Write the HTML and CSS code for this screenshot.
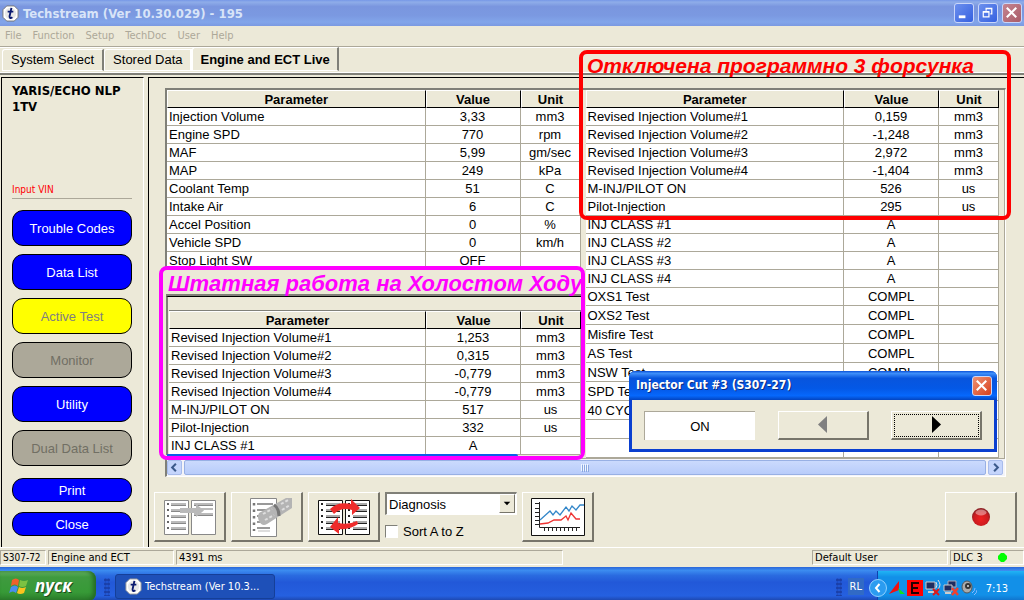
FILE: index.html
```html
<!DOCTYPE html>
<html lang="en">
<head>
<meta charset="utf-8">
<title>Techstream (Ver 10.30.029) - 195</title>
<link rel="stylesheet" href="styles.css">
</head>
<body>
<header class="titlebar">
  <svg class="logo" viewBox="0 0 18 18" aria-hidden="true"><path d="M5 1h8l4 4v8l-4 4H5l-4-4V5z" fill="#fff" stroke="#777"/><circle cx="9" cy="9" r="6" fill="#e8e8e8"/><path d="M10 3L8 12q0 3 3 1M6 7h6" fill="none" stroke="#0a1a70" stroke-width="2"/></svg>
  <h1 class="title">Techstream (Ver 10.30.029) - 195</h1>
  <button class="winbtn" aria-label="Minimize"><svg viewBox="0 0 19 19"><path d="M4 12h7v3H4z" fill="#fff"/></svg></button>
  <button class="winbtn" aria-label="Restore"><svg viewBox="0 0 19 19"><path d="M4.500 8.500h6v5h-6zM4 8h7M7.500 7V4.500h6v6H12M7 5h7" fill="none" stroke="#fff" stroke-width="1.300"/></svg></button>
  <button class="winbtn winbtn-close dim" aria-label="Close window"><svg viewBox="0 0 19 19"><path d="M4 4l10 10M14 4L4 14" stroke="#fff" stroke-width="2.200"/></svg></button>
</header>
<nav class="menu">
  <button disabled>File</button><button disabled>Function</button><button disabled>Setup</button><button disabled>TechDoc</button><button disabled>User</button><button disabled>Help</button>
</nav>
<nav class="tabs">
  <button class="tab">System Select</button><button class="tab tab-flat">Stored Data</button><button class="tab tab-active">Engine and ECT Live</button>
</nav>
<div class="workspace">
  <aside class="sidebar">
    <h2 class="vehicle">YARIS/ECHO NLP<br>1TV</h2>
    <p class="vin">Input VIN</p>
    <button class="pill">Trouble Codes</button>
    <button class="pill">Data List</button>
    <button class="pill pill-yellow">Active Test</button>
    <button class="pill pill-off" disabled>Monitor</button>
    <button class="pill">Utility</button>
    <button class="pill pill-off" disabled>Dual Data List</button>
    <button class="pill pill-small pill-print">Print</button>
    <button class="pill pill-small">Close</button>
  </aside>
  <main class="content">
    <section class="grid">
      <div class="tables">
        <div class="pane">
          <table>
            <thead><tr><th>Parameter</th><th class="value">Value</th><th class="unit">Unit</th></tr></thead>
            <tbody>
              <tr><td>Injection Volume</td><td>3,33</td><td>mm3</td></tr>
              <tr><td>Engine SPD</td><td>770</td><td>rpm</td></tr>
              <tr><td>MAF</td><td>5,99</td><td>gm/sec</td></tr>
              <tr><td>MAP</td><td>249</td><td>kPa</td></tr>
              <tr><td>Coolant Temp</td><td>51</td><td>C</td></tr>
              <tr><td>Intake Air</td><td>6</td><td>C</td></tr>
              <tr><td>Accel Position</td><td>0</td><td>%</td></tr>
              <tr><td>Vehicle SPD</td><td>0</td><td>km/h</td></tr>
              <tr><td>Stop Light SW</td><td>OFF</td><td></td></tr>
            </tbody>
          </table>
        </div>
        <div class="pane">
          <table>
            <thead><tr><th>Parameter</th><th class="value">Value</th><th class="unit">Unit</th></tr></thead>
            <tbody>
              <tr><td>Revised Injection Volume#1</td><td>0,159</td><td>mm3</td></tr>
              <tr><td>Revised Injection Volume#2</td><td>-1,248</td><td>mm3</td></tr>
              <tr><td>Revised Injection Volume#3</td><td>2,972</td><td>mm3</td></tr>
              <tr><td>Revised Injection Volume#4</td><td>-1,404</td><td>mm3</td></tr>
              <tr><td>M-INJ/PILOT ON</td><td>526</td><td>us</td></tr>
              <tr><td>Pilot-Injection</td><td>295</td><td>us</td></tr>
              <tr><td>INJ CLASS #1</td><td>A</td><td></td></tr>
              <tr><td>INJ CLASS #2</td><td>A</td><td></td></tr>
              <tr><td>INJ CLASS #3</td><td>A</td><td></td></tr>
              <tr><td>INJ CLASS #4</td><td>A</td><td></td></tr>
              <tr><td>OXS1 Test</td><td>COMPL</td><td></td></tr>
            </tbody>
            <tbody class="tall">
              <tr><td>OXS2 Test</td><td>COMPL</td><td></td></tr>
              <tr><td>Misfire Test</td><td>COMPL</td><td></td></tr>
              <tr><td>AS Test</td><td>COMPL</td><td></td></tr>
              <tr><td>NSW Test</td><td>COMPL</td><td></td></tr>
              <tr><td>SPD Test</td><td></td><td></td></tr>
              <tr><td>40 CYC</td><td></td><td></td></tr>
              <tr><td>&nbsp;</td><td></td><td></td></tr>
              <tr><td>&nbsp;</td><td></td><td></td></tr>
            </tbody>
          </table>
        </div>
      </div>
      <div class="scroll">
        <button class="scroll-btn" aria-label="Scroll left"><svg viewBox="0 0 14 14"><path d="M8.500 3L4.500 7l4 4" fill="none" stroke="#3c5a8c" stroke-width="2.200"/></svg></button>
        <div class="thumb"><svg viewBox="0 0 8 8"><path d="M.5 0v7M2.500 0v7M4.500 0v7M6.500 0v7" stroke="#f0f6ff"/><path d="M1.500 1v7M3.500 1v7M5.500 1v7M7.500 1v7" stroke="#8ca8e0"/></svg></div>
        <button class="scroll-btn" aria-label="Scroll right"><svg viewBox="0 0 14 14"><path d="M5.500 3l4 4-4 4" fill="none" stroke="#3c5a8c" stroke-width="2.200"/></svg></button>
      </div>

      <div class="mark mark-red"><p class="caption">Отключена программно 3 форсунка</p></div>

      <section class="mark mark-pink">
        <p class="caption">Штатная работа на Холостом Ходу</p>
        <div class="inset">
          <table>
            <thead><tr><th>Parameter</th><th class="value">Value</th><th class="unit">Unit</th></tr></thead>
            <tbody>
              <tr><td>Revised Injection Volume#1</td><td>1,253</td><td>mm3</td></tr>
              <tr><td>Revised Injection Volume#2</td><td>0,315</td><td>mm3</td></tr>
              <tr><td>Revised Injection Volume#3</td><td>-0,779</td><td>mm3</td></tr>
              <tr><td>Revised Injection Volume#4</td><td>-0,779</td><td>mm3</td></tr>
              <tr><td>M-INJ/PILOT ON</td><td>517</td><td>us</td></tr>
              <tr><td>Pilot-Injection</td><td>332</td><td>us</td></tr>
              <tr><td>INJ CLASS #1</td><td>A</td><td></td></tr>
            </tbody>
          </table>
        </div>
        <div class="blue-edge"></div>
      </section>

      <section class="dialog" role="dialog" aria-labelledby="dlg">
        <div class="dialog-bar"><h2 id="dlg">Injector Cut #3 (S307-27)</h2>
          <button class="winbtn winbtn-close" aria-label="Close dialog"><svg viewBox="0 0 19 19"><path d="M4 4l10 10M14 4L4 14" stroke="#fff" stroke-width="2.200"/></svg></button></div>
        <div class="dialog-body">
          <output class="state">ON</output>
          <button class="arrow" disabled aria-label="Previous"><svg viewBox="0 0 9 18"><path d="M9 0v17L0 8.500z" fill="#808080"/></svg></button>
          <button class="arrow focus" aria-label="Next"><svg viewBox="0 0 9 18"><path d="M0 0v17l9-8.500z"/></svg></button>
        </div>
      </section>
    </section>

    <div class="toolbar">
      <button class="tool" aria-label="Move to second list"><svg viewBox="0 0 54 42">
        <path d="M1.500 4.500h24v34h-24zM28.500 4.500h24v34h-24z" fill="#fff" stroke="#888"/>
        <path d="M8 8h15M8 14h15M8 20h15M8 26h15M8 32h15M31 8h19M31 13h19M31 18h19" stroke="#bbb" stroke-width="2"/>
        <path d="M8 9.500h15M8 15.500h15M8 21.500h15M8 27.500h15M8 33.500h15M31 9.500h19M31 19.500h19" stroke="#888"/>
        <path d="M5 7v28" stroke="#666" stroke-width="2" stroke-dasharray="2 4"/>
        <path d="M17 12h16V8l8 6.500-8 6.500v-4H17z" fill="#b9b9b9"/></svg></button>
      <button class="tool" aria-label="Snapshot"><svg viewBox="0 0 54 42">
        <path d="M10.500 2.500h26v38h-26z" fill="#fff" stroke="#888"/>
        <path d="M17 8h16M17 14h14M17 20h6M17 26h8M17 32h13" stroke="#999" stroke-width="2"/>
        <path d="M18 35h12" stroke="#ddd" stroke-width="2"/>
        <path d="M14 7v28" stroke="#777" stroke-width="2.500" stroke-dasharray="2.500 4"/>
        <path d="M19 17L46 2h6v10L27 28q-5 3-8-3-2-4 0-8z" fill="#b4b4b4"/>
        <path d="M34 9q5 3 5 11" fill="none" stroke="#777" stroke-width="3"/>
        <path d="M23 18l9-5M25 24l9-5M41 8l7-4M42 14l8-5" stroke="#dedede" stroke-width="2" stroke-dasharray="3 2"/></svg></button>
      <button class="tool" aria-label="Swap lists"><svg viewBox="0 0 54 42">
        <path d="M1.500 4.500h24v34h-24zM28.500 4.500h24v34h-24z" fill="#fff" stroke="#111"/>
        <path d="M9 8h14M9 14h14M9 20h14M9 26h14M9 32h14M36 8h14M36 14h14M36 20h14M36 26h14M36 32h14" stroke="#aaa" stroke-width="2"/>
        <path d="M9 9.500h14M9 15.500h14M9 21.500h14M9 27.500h14M9 33.500h14M36 9.500h14M36 15.500h14M36 21.500h14M36 27.500h14M36 33.500h14" stroke="#222"/>
        <path d="M5 7v28M32 7v28" stroke="#222" stroke-width="2" stroke-dasharray="2 4"/>
        <path d="M13 13Q21 5 34 8V3l9 9-8 7v-5q-11-3-18 4z" fill="#ee2b2b"/>
        <path d="M41 28Q33 34 22 33v5l-9-7 8-10v6q11 2 19-2z" fill="#ee2b2b"/></svg></button>
      <div class="options">
        <span class="combo"><select aria-label="Group"><option>Diagnosis</option></select><svg class="combo-arrow" viewBox="0 0 15 18" aria-hidden="true"><path d="M4 7h7l-3.500 4z"/></svg></span>
        <label class="check"><input type="checkbox">Sort A to Z</label>
      </div>
      <button class="tool" aria-label="Graph"><svg viewBox="0 0 54 42">
        <path d="M.5 2.500h53v37H.5z" fill="#fff" stroke="#111"/>
        <path d="M8.500 6v25.500H49M4 7.500h5M4 12.500h5M4 16.500h5M4 20.500h5M4 24.500h5M4 28.500h5M13.500 32v3M17.500 32v3M21.500 32v3M25.500 32v3M29.500 32v3M33.500 32v3M37.500 32v3M41.500 32v3M45.500 32v3" fill="none" stroke="#222"/>
        <path d="M9 24l10-9 3 4 3-4 4 4 6-8 3 4 3-5 4 4 4-5h4" fill="none" stroke="#3487c9" stroke-width="1.300"/>
        <path d="M9 28l8-1 6-3h7l5-4 2 4 3-7 5 6h4" fill="none" stroke="#e33" stroke-width="1.300"/></svg></button>
      <button class="tool tool-record" aria-label="Record"><svg viewBox="0 0 54 42">
        <defs><radialGradient id="ball" cx="50%" cy="60%" r="55%"><stop offset="0" stop-color="#f02020"/><stop offset=".7" stop-color="#cc1c20"/><stop offset="1" stop-color="#8e2024"/></radialGradient></defs>
        <circle cx="27" cy="21" r="9" fill="url(#ball)"/><ellipse cx="27" cy="16.500" rx="5.500" ry="3" fill="#fff" opacity=".4"/></svg></button>
    </div>
  </main>
</div>
<div class="status">
  <span class="s-code">S307-72</span><span class="s-name">Engine and ECT</span><span class="s-time">4391 ms</span><span class="s-user">Default User</span><span class="s-dlc">DLC 3<svg class="led" viewBox="0 0 9 9" aria-hidden="true"><path d="M3 0h3l3 3v3L6 9H3L0 6V3z" fill="#0f0"/></svg></span>
</div>
<footer class="taskbar">
  <button class="start"><svg viewBox="0 0 20 18" aria-hidden="true"><path d="M3 3q4-3 7 0L9 9Q6 6 2 9z" fill="#f0602c"/><path d="M11 3q4 2 8 0l-2 6q-4 2-7 0z" fill="#7cc242"/><path d="M2 10q4-3 7 0l-2 6q-3-3-7 0z" fill="#4a8df0"/><path d="M10 10q3 2 7 0l-2 6q-4 2-7 0z" fill="#fbc31e"/></svg>пуск</button>
  <i class="grip"></i>
  <button class="task"><svg class="logo" viewBox="0 0 18 18" aria-hidden="true"><path d="M5 1h8l4 4v8l-4 4H5l-4-4V5z" fill="#fff" stroke="#999"/><circle cx="9" cy="9" r="6" fill="#e8e8e8"/><path d="M10 3L8 12q0 3 3 1M6 7h6" fill="none" stroke="#0a1a70" stroke-width="2"/></svg>Techstream (Ver 10.3...</button>
  <i class="grip grip-right"></i>
  <span class="lang">RL</span>
  <div class="tray">
    <button class="expand" aria-label="Show hidden icons"><svg viewBox="0 0 18 18"><circle cx="9" cy="9" r="8.500" fill="#2b9cf0" stroke="#8fd0ff"/><path d="M10.500 5L7 9l3.500 4" fill="none" stroke="#fff" stroke-width="2"/></svg></button>
    <svg viewBox="0 0 16 16"><path d="M10 1v9L0 14z" fill="#f01010"/><path d="M9 8l7 6h-5z" fill="#10e020"/></svg>
    <svg viewBox="0 0 16 16"><path d="M0 0h16v16H0z" fill="#f00"/><path d="M12 3H5v10h7M5 8h6" fill="none" stroke="#200" stroke-width="2"/></svg>
    <svg viewBox="0 0 16 16"><path d="M1 2h9v7H1z" fill="#202c60" stroke="#ccc"/><path d="M3 12h6" stroke="#ccc" stroke-width="2"/><path d="M11 2q2 3 0 6M13 0q4 5 0 9" fill="none" stroke="#e0e0e0"/><path d="M8 9l6 6M14 9l-6 6" stroke="#e01818" stroke-width="2"/></svg>
    <svg viewBox="0 0 16 16"><path d="M5 1h8v6H5z" fill="#202c60" stroke="#aab"/><path d="M1 5h8v6H1z" fill="#202c60" stroke="#ccc"/><path d="M2 13h6" stroke="#ccc" stroke-width="2"/><path d="M9 8l6 7M15 8l-6 7" stroke="#f04030" stroke-width="2.500"/></svg>
    <svg viewBox="0 0 16 16"><ellipse cx="6" cy="7" rx="5" ry="6" fill="#aaa" stroke="#555"/><circle cx="7" cy="6" r="3" fill="#333"/><circle cx="7" cy="6" r="1" fill="#ddd"/><path d="M11 13q3-2 3-5M13 15q3-2 3-5" fill="none" stroke="#86b8ff"/></svg>
    <time>7:13</time>
  </div>
</footer>
</body>
</html>
```
FILE: styles.css
```css
* { box-sizing: border-box; }
body {
  margin: 0;
  min-height: 100vh;
  display: flex;
  flex-direction: column;
  background: #ece9d8;
  color: #000;
  font: 13px/17px "Liberation Sans", Arial, sans-serif;
}
button, select { font: inherit; color: inherit; margin: 0; padding: 0; border: 0; background: none; }
h1, h2, p { margin: 0; }
svg { display: block; flex: none; }

.titlebar {
  display: flex; align-items: center; gap: 4px;
  height: 26px; padding: 0 2px;
  background: linear-gradient(#7697e7 0%, #8fade9 8%, #7a96df 25%, #7b99e1 60%, #82a5ea 85%, #7b99e1 100%);
}
.logo { width: 17px; height: 17px; }
.title { flex: 1; font: bold 13px/17px "DejaVu Sans Condensed", "DejaVu Sans", sans-serif; color: #d8e4f8; }
.winbtn {
  width: 20px; height: 20px; border: 1px solid #c9d6fa; border-radius: 3px;
  background: linear-gradient(135deg, #6c90ee, #3560e0);
}
.winbtn svg { width: 18px; height: 18px; }
.winbtn-close { background: linear-gradient(135deg, #ee9274, #d8401c); }
.winbtn-close.dim { background: linear-gradient(135deg, #c58490, #a95c68); }

.menu {
  display: flex; gap: 11px; height: 21px; padding: 0 5px 2px;
  border-bottom: 1px solid #aca899;
  font-family: "DejaVu Sans Condensed", "DejaVu Sans", sans-serif; font-size: 11px; color: #aca899;
}
.tabs {
  display: flex; align-items: flex-end; height: 28px; padding: 1px 2px 0;
  border-top: 1px solid #fff;
  border-bottom: 2px solid #808078;
  background: linear-gradient(#fff, #fff) 0 100% / 100% 1px no-repeat;
}
.tab {
  height: 22px; margin-bottom: 2px; padding: 0 8px 2px;
  border: 1px solid #fff; border-right: 2px solid #808078; border-radius: 3px 0 0 0;
}
.tab-flat { border-right-color: #fff; }
.tab-active { height: 24px; padding: 0 7px; font-weight: bold; }

.workspace { flex: 1; display: flex; gap: 4px; padding: 2px 0 0 1px; border-bottom: 1px solid #fff; }
.sidebar {
  display: flex; flex-direction: column; width: 143px; padding: 5px 11px 0 10px;
  border: 1px solid #000; border-right-color: #fff; border-bottom: 0;
}
.vehicle { font: bold 13px/16px "DejaVu Sans Condensed", "DejaVu Sans", sans-serif; height: 100px; white-space: nowrap; }
.vin {
  height: 16px; margin-bottom: 11px; border-bottom: 1px solid #aca899;
  font: 10px/14px "DejaVu Sans Condensed", "DejaVu Sans", sans-serif; color: #f00;
}
.pill {
  height: 36px; margin-bottom: 8px; border: 1px solid #000; border-radius: 11px;
  background: #00f; color: #fff;
}
.pill-yellow { background: #ff0; color: #808080; }
.pill-off { background: #aca899; color: #716f64; }
.pill-small { height: 24px; margin-bottom: 10px; }
.pill-print { margin-top: 4px; }

.content { flex: 1; min-width: 0; padding: 10px 18px 5px 16px; border-top: 1px solid #000; border-left: 1px solid #000; }
.grid { position: relative; border: 2px solid #808078; border-right: 1px solid #fff; border-bottom: 1px solid #fff; }
.tables { display: flex; gap: 5px; padding-right: 5px; border-right: 1px solid #aca899; }
.pane { flex: 1; min-width: 0; background: #fff; }
table { width: 100%; table-layout: fixed; border-collapse: separate; border-spacing: 0; }
th { padding: 1px 0 0; line-height: 15px; border: 1px solid #fff; border-right-color: #000; border-bottom: 1px solid #000; background: #ece9d8; }
.value { width: 95px; }
.unit { width: 60px; }
td { height: 18px; padding: 1px 2px 0; line-height: 16px; border-right: 1px solid #aca899; border-bottom: 1px solid #aca899; text-align: center; white-space: nowrap; overflow: hidden; }
td:first-child { text-align: left; }
.tall td { height: 19px; }

.scroll { display: flex; gap: 2px; height: 18px; padding: 1px 2px 1px 0; border-top: 1px solid #aca899; background: #f4f4f8; }
.scroll-btn { width: 15px; border: 1px solid #a8bcec; border-radius: 2px; background: #c5d5fc; }
.scroll-btn svg { width: 13px; height: 13px; }
.thumb { flex: 1; display: flex; align-items: center; justify-content: center; border: 1px solid #98b0e4; border-radius: 2px; background: linear-gradient(#cbdafd, #b8ccfa); }
.thumb svg { width: 8px; height: 8px; }

.mark { position: absolute; border: 4px solid; border-radius: 8px; }
.caption { font: italic bold 21px/24px "Liberation Sans", Arial, sans-serif; white-space: nowrap; }
.mark-red { top: -40px; left: calc(50% - 7px); right: -6px; height: 170px; padding: 0 4px; border-color: #f00; color: #f00; pointer-events: none; }
.mark-pink { top: 176px; left: -8px; width: calc(50% + 7px); height: 194px; border-color: #f0f; background: #ece9d8; overflow: hidden; }
.mark-pink .caption { margin-left: 3px; height: 26px; padding: 2px 0 0 2px; border-bottom: 2px solid #808078; font-size: 22px; color: #f0f; }
.inset { margin-left: 3px; padding: 13px 0 0 1px; border-top: 1px solid #000; border-left: 2px solid #808078; }
.inset table { background: #fff; border-top: 1px solid #808078; }
.blue-edge { position: absolute; left: 4px; right: 63px; bottom: 0; height: 2px; background: #0a5ee8; border-radius: 0 3px 0 0; }

.dialog { position: absolute; top: 281px; right: 8px; width: 368px; border: 3px solid #0a3fd0; border-top: 0; border-radius: 6px 6px 0 0; background: #ece9d8; }
.dialog-bar {
  display: flex; align-items: center; justify-content: space-between; height: 29px; margin: 0 -3px; padding: 0 5px 0 7px;
  border-radius: 6px 6px 0 0; color: #fff;
  background: linear-gradient(#0a50d8 0%, #3f90fa 8%, #0855dd 25%, #0458e6 60%, #0668fc 85%, #0344c0 100%);
}
.dialog-bar h2 { font: bold 12px/17px "DejaVu Sans Condensed", "DejaVu Sans", sans-serif; text-shadow: 1px 1px #0a2a80; }
.dialog-body { display: flex; justify-content: space-between; padding: 11px 12px 9px; }
.state { width: 111px; height: 29px; line-height: 29px; border-top: 1px solid #aca899; border-left: 1px solid #aca899; background: #fff; text-align: center; }
.arrow, .tool { display: flex; align-items: center; justify-content: center; border: 1px solid #fff; border-right: 2px solid #77756a; border-bottom: 2px solid #77756a; background: #ece9d8; }
.arrow { width: 91px; height: 29px; }
.arrow svg { width: 9px; height: 18px; }
.focus { outline: 1px dotted #000; outline-offset: -4px; }

.toolbar { display: flex; gap: 5px; margin: 15px -11px 0; }
.tool { width: 72px; height: 50px; }
.tool svg { width: 54px; height: 42px; }
.tool-record { margin-left: auto; }
.options { width: 132px; }
.combo { position: relative; display: block; height: 23px; border: 2px solid #808078; border-right: 1px solid #fff; border-bottom: 1px solid #fff; background: #fff; }
.combo select { width: 100%; height: 20px; padding-left: 2px; appearance: none; }
.combo-arrow { position: absolute; top: 0; right: 1px; width: 16px; height: 19px; border: 1px solid #fff; border-right-color: #77756a; border-bottom-color: #77756a; background: #ece9d8; pointer-events: none; }
.check { display: flex; align-items: center; gap: 5px; margin-top: 8px; }
.check input { appearance: none; width: 13px; height: 13px; margin: 0; border: 1px solid #808078; border-right-color: #fff; border-bottom-color: #fff; background: #fff; }

.status { display: flex; gap: 2px; height: 19px; padding: 2px 0; font: 10px/14px "DejaVu Sans", sans-serif; }
.status span { padding-left: 2px; border: 1px solid #aca899; border-right-color: #fff; border-bottom-color: #fff; white-space: nowrap; }
.s-code { width: 46px; font-family: "DejaVu Sans Condensed", sans-serif; }
.s-name { width: 126px; }
.s-time { width: 387px; }
.status .s-user { width: 136px; margin-left: auto; }
.status .s-dlc { width: 74px; display: flex; align-items: center; justify-content: space-between; padding-right: 16px; }
.led { width: 9px; height: 9px; }

.taskbar {
  display: flex; align-items: stretch; height: 34px; color: #fff;
  background: linear-gradient(#2a66d8 0%, #3c8cf0 10%, #2a6be0 25%, #2258d8 45%, #2560e0 85%, #1c44a8 100%);
  font: 11px/17px "DejaVu Sans Condensed", "DejaVu Sans", sans-serif;
}
.start {
  display: flex; align-items: center; gap: 6px; width: 96px; margin-top: 4px; padding-left: 9px; border-radius: 0 8px 8px 0;
  background: linear-gradient(#6cb868 0%, #3f9a3f 20%, #379a37 70%, #2a7a2a 100%);
  box-shadow: inset -3px 0 4px #246a24;
  font: italic bold 17px/20px "Open Sans", sans-serif; text-shadow: 1px 1px #1c4a1c;
}
.start svg { width: 20px; height: 18px; }
.grip { width: 6px; margin: 11px 9px 5px 8px; background: radial-gradient(circle, #1a3fa8 1px, transparent 2px) 0 0 / 3px 4px; }
.task { display: flex; align-items: center; gap: 3px; width: 160px; margin: 7px 0 2px -4px; padding-left: 9px; border: 1px solid #153f98; border-radius: 3px; background: #1e50b8; }
.grip-right { margin-left: auto; margin-right: 6px; }
.lang { align-self: center; margin: 5px 13px 0 0; padding: 0 2px; background: #316ac5; }
.tray {
  display: flex; align-items: center; gap: 2px; width: 147px; padding-top: 4px; margin-top: 4px;
  border-left: 1px solid #1042af; background: linear-gradient(#20b4f4 0%, #1290e8 20%, #1290e8 80%, #1070c8 100%);
}
.tray svg { width: 16px; height: 16px; }
.expand { margin-left: -9px; }
.tray .expand svg { width: 18px; height: 18px; }
.tray time { margin: 0 16px 0 auto; }
```
